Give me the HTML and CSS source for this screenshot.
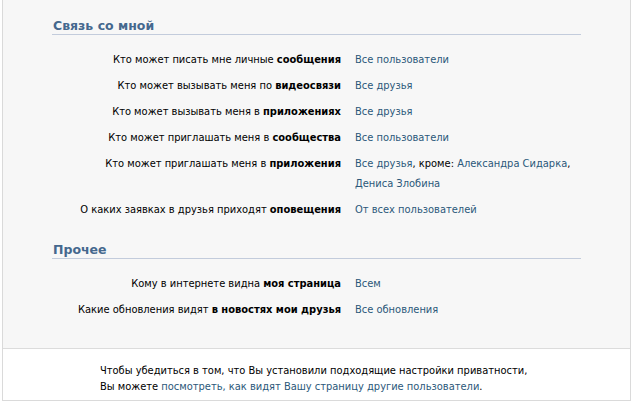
FILE: index.html
```html
<!DOCTYPE html>
<html lang="ru">
<head>
<meta charset="utf-8">
<link rel="stylesheet" href="styles.css">
</head>
<body>
<div class="frame">
  <div class="settings">
    <div class="section">
      <div class="section-title">Связь со мной</div>
      <div class="rows">
        <div class="label">Кто может писать мне личные <b>сообщения</b></div>
        <div class="value"><a>Все пользователи</a></div>
        <div class="label">Кто может вызывать меня по <b>видеосвязи</b></div>
        <div class="value"><a>Все друзья</a></div>
        <div class="label">Кто может вызывать меня в <b>приложениях</b></div>
        <div class="value"><a>Все друзья</a></div>
        <div class="label">Кто может приглашать меня в <b>сообщества</b></div>
        <div class="value"><a>Все пользователи</a></div>
        <div class="label">Кто может приглашать меня в <b>приложения</b></div>
        <div class="value"><a>Все друзья</a>, кроме: <a>Александра Сидарка</a>,<br><a>Дениса Злобина</a></div>
        <div class="label">О каких заявках в друзья приходят <b>оповещения</b></div>
        <div class="value"><a>От всех пользователей</a></div>
      </div>
    </div>
    <div class="section second">
      <div class="section-title">Прочее</div>
      <div class="rows">
        <div class="label">Кому в интернете видна <b>моя страница</b></div>
        <div class="value"><a>Всем</a></div>
        <div class="label">Какие обновления видят <b>в новостях мои друзья</b></div>
        <div class="value"><a>Все обновления</a></div>
      </div>
    </div>
  </div>
  <div class="footer">
    Чтобы убедиться в том, что Вы установили подходящие настройки приватности,<br>
    Вы можете <a>посмотреть, как видят Вашу страницу другие пользователи</a>.
  </div>
</div>
</body>
</html>
```

FILE: styles.css
```css
html, body {
  margin: 0;
  padding: 0;
  background: #ffffff;
}
body {
  font-family: "DejaVu Sans Condensed", "DejaVu Sans", Tahoma, sans-serif;
  font-size: 11px;
  color: #000;
}
.frame {
  margin-left: 2px;
  width: 627px;
  border: 1px solid #dadada;
  border-top: none;
}
.settings {
  background: #f7f7f7;
  height: 349px;
  box-sizing: border-box;
  padding-top: 18px;
  border-bottom: 1px solid #dcdcdc;
}
.section-title {
  margin-left: 49px;
  width: 528px;
  font-family: "DejaVu Sans", Tahoma, sans-serif;
  font-size: 12.5px;
  font-weight: bold;
  color: #45688e;
  padding: 0 0 0 1px;
  line-height: 16px;
  border-bottom: 1px solid #c3ccdc;
}
.rows {
  display: grid;
  grid-template-columns: 338px 1fr;
  column-gap: 14px;
  padding-top: 12px;
}
.label, .value {
  line-height: 20px;
  padding: 3px 0;
}
.label {
  text-align: right;
}
.value {
  color: #000;
}
a {
  color: #2b587a;
  text-decoration: none;
}
.second {
  margin-top: 19px;
}
.footer {
  background: #fff;
  padding: 14px 0 0 97px;
  height: 37px;
  line-height: 16px;
}
```
